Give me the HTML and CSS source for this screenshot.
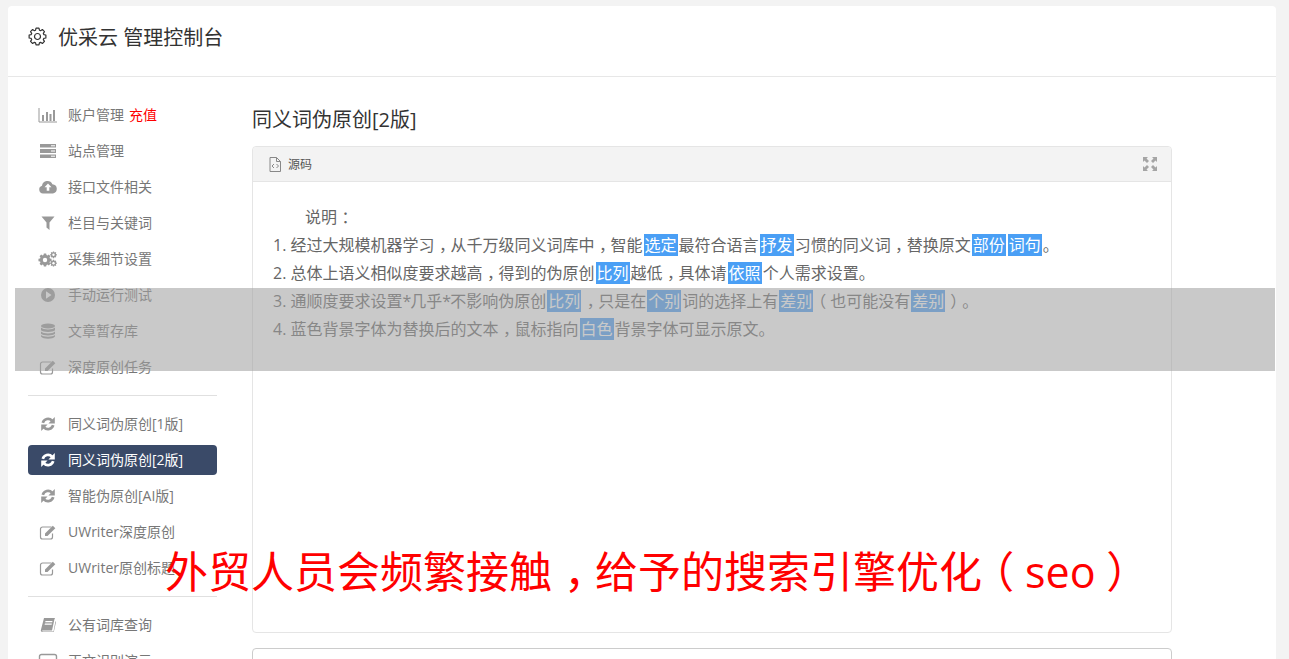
FILE: index.html
```html
<!DOCTYPE html>
<html lang="zh-CN">
<head>
  <meta charset="UTF-8">
  <meta name="viewport" content="width=device-width, initial-scale=1.0">
  <title>优采云 管理控制台</title>
  <link rel="stylesheet" href="styles.css">
</head>
<body>
  <svg class="sprite" aria-hidden="true">
    <defs>
      <path id="gear" d="M6.31-1.93L8.37-1.48 8.37 1.48 6.31 1.93 5.83 3.1 6.96 4.88 4.88 6.96 3.1 5.83 1.93 6.31 1.48 8.37-1.48 8.37-1.93 6.31-3.1 5.83-4.88 6.96-6.96 4.88-5.83 3.1-6.31 1.93-8.37 1.48-8.37-1.48-6.31-1.93-5.83-3.1-6.96-4.88-4.88-6.96-3.1-5.83-1.93-6.31-1.48-8.37 1.48-8.37 1.93-6.31 3.1-5.83 4.88-6.96 6.96-4.88 5.83-3.1Z"/>
    </defs>
    <symbol id="i-chart" viewBox="0 0 20 16">
      <path d="M1 1v14h18" fill="none" stroke="currentColor"/>
      <path d="M4 8h2v6H4zM8 5h2v9H8zM11.500 7h2v7h-2zM15 3h2v11h-2z" fill="currentColor"/>
    </symbol>
    <symbol id="i-server" viewBox="0 0 20 16">
      <path d="M2 1h16v3.500H2zM2 6h16v4H2zM2 11.500h16V15H2z" fill="currentColor"/>
      <path d="M13 2.800h4M13 8h4M13 13.200h4" stroke="#fff"/>
    </symbol>
    <symbol id="i-cloud" viewBox="0 0 20 16">
      <path d="M5 14.500a4 4 0 0 1-1-7.800 5.500 5.500 0 0 1 10.400-1.500 4.700 4.700 0 0 1 .6 9.300z" fill="currentColor"/>
      <path d="M10 4.500l3.500 3.700h-2.200v3.600H8.700V8.200H6.500z" fill="#fff"/>
    </symbol>
    <symbol id="i-filter" viewBox="0 0 20 16">
      <path d="M3.500 1.500h13L11.500 7.500v7.500l-3-2.500v-5z" fill="currentColor"/>
    </symbol>
    <symbol id="i-cogs" viewBox="0 0 20 16">
      <g transform="translate(7 9) scale(.78)"><use href="#gear" fill="currentColor"/><circle r="2.800" fill="#fff"/></g>
      <g transform="translate(15.500 3.800) scale(.4)"><use href="#gear" fill="currentColor"/><circle r="3" fill="#fff"/></g>
      <g transform="translate(15.500 12.200) scale(.4)"><use href="#gear" fill="currentColor"/><circle r="3" fill="#fff"/></g>
    </symbol>
    <symbol id="i-play" viewBox="0 0 20 16">
      <circle cx="10" cy="8" r="7" fill="currentColor"/>
      <path d="M8 4.300L13.500 8 8 11.700z" fill="#fff"/>
    </symbol>
    <symbol id="i-db" viewBox="0 0 20 16">
      <ellipse cx="10" cy="3" rx="7" ry="2.500" fill="currentColor"/>
      <path d="M3 4.500C5 7 15 7 17 4.500V7.200C15 9.500 5 9.500 3 7.200zM3 8.500C5 11 15 11 17 8.500V10.800C15 13 5 13 3 10.800zM3 12C5 14.300 15 14.300 17 12V13.500C15 16.500 5 16.500 3 13.500z" fill="currentColor"/>
    </symbol>
    <symbol id="i-edit" viewBox="0 0 20 16">
      <path d="M13.500 3H4.500A2 2 0 0 0 2.500 5v8a2 2 0 0 0 2 2h8a2 2 0 0 0 2-2V9.500" fill="none" stroke="currentColor" stroke-width="1.200"/>
      <path d="M7 9.500L14.800 1.700 17.300 4.200 9.500 12H7z" fill="currentColor"/>
    </symbol>
    <symbol id="i-refresh" viewBox="0 0 20 16">
      <path d="M4.800 6.800A5.400 5.400 0 0 1 14 4.600M15.200 9.200A5.400 5.400 0 0 1 6 11.400" fill="none" stroke="currentColor" stroke-width="2.700"/>
      <path d="M16.800 1V7.400H10.400zM3.200 15V8.600H9.600z" fill="currentColor"/>
    </symbol>
    <symbol id="i-book" viewBox="0 0 20 16">
      <path d="M6 1h11l-.6 1.500L14 13.500H4.500C3.800 13.500 4 14.500 5 14.500h10.500L17.500 4l.5 1-2.200 10H4.500C3 15 2.500 13.800 3 12.500zM7.500 4l-.3 1.200h7L14.500 4zM6.900 6.500l-.3 1.200h7l.3-1.200z" fill="currentColor" fill-rule="evenodd"/>
    </symbol>
    <symbol id="i-screen" viewBox="0 0 20 16">
      <rect x="1.500" y="1.500" width="17" height="13" rx="2" fill="none" stroke="currentColor" stroke-width="1.400"/>
    </symbol>
  </svg>

  <div class="card">
    <div class="card-head">
      <svg class="head-gear" viewBox="-9.500 -9.500 19 19"><use href="#gear"/><circle r="3"/></svg>
      <span>优采云 管理控制台</span>
    </div>

    <div class="main">
      <div class="side">
        <a class="item"><svg class="ico"><use href="#i-chart"/></svg>账户管理<b class="pay">充值</b></a>
        <a class="item"><svg class="ico"><use href="#i-server"/></svg>站点管理</a>
        <a class="item"><svg class="ico"><use href="#i-cloud"/></svg>接口文件相关</a>
        <a class="item"><svg class="ico"><use href="#i-filter"/></svg>栏目与关键词</a>
        <a class="item"><svg class="ico"><use href="#i-cogs"/></svg>采集细节设置</a>
        <a class="item"><svg class="ico"><use href="#i-play"/></svg>手动运行测试</a>
        <a class="item"><svg class="ico"><use href="#i-db"/></svg>文章暂存库</a>
        <a class="item"><svg class="ico"><use href="#i-edit"/></svg>深度原创任务</a>
        <div class="divider"></div>
        <a class="item"><svg class="ico"><use href="#i-refresh"/></svg>同义词伪原创[1版]</a>
        <a class="item active"><svg class="ico"><use href="#i-refresh"/></svg>同义词伪原创[2版]</a>
        <a class="item"><svg class="ico"><use href="#i-refresh"/></svg>智能伪原创[AI版]</a>
        <a class="item"><svg class="ico"><use href="#i-edit"/></svg>UWriter深度原创</a>
        <a class="item"><svg class="ico"><use href="#i-edit"/></svg>UWriter原创标题</a>
        <div class="divider"></div>
        <a class="item"><svg class="ico"><use href="#i-book"/></svg>公有词库查询</a>
        <a class="item"><svg class="ico"><use href="#i-screen"/></svg>正文识别演示</a>
      </div>

      <div class="content">
        <h2>同义词伪原创[2版]</h2>
        <div class="panel">
          <div class="panel-head">
            <svg class="file-ico" viewBox="0 0 12 15">
              <path d="M1 .5h6.500L11.500 4.500v10H1zM7.500 .5v4h4"/>
              <path d="M5 7L3 9l2 2M7.500 7l2 2-2 2"/>
            </svg>
            <span>源码</span>
            <svg class="expand-ico" viewBox="0 0 14 14">
              <path d="M0 0h5L3.500 1.500 6 4 4 6 1.500 3.500 0 5zM14 0v5L12.500 3.500 10 6 8 4 10.500 1.500 9 0zM0 14V9L1.500 10.500 4 8 6 10 3.500 12.500 5 14zM14 14H9L10.500 12.500 8 10 10 8 12.500 10.500 14 9z"/>
            </svg>
          </div>
          <div class="panel-body">
            <p class="intro">说明<i class="cm">：</i></p>
            <p>1. 经过大规模机器学习<i class="cm">，</i>从千万级同义词库中<i class="cm">，</i>智能<em>选定</em>最符合语言<em>抒发</em>习惯的同义词<i class="cm">，</i>替换原文<em>部份</em><em>词句</em>。</p>
            <p>2. 总体上语义相似度要求越高<i class="cm">，</i>得到的伪原创<em>比列</em>越低<i class="cm">，</i>具体请<em>依照</em>个人需求设置。</p>
            <p>3. 通顺度要求设置<span class="star">*</span>几乎<span class="star">*</span>不影响伪原创<em>比列</em><i class="cm">，</i>只是在<em>个别</em>词的选择上有<em>差别</em><i class="lp">（</i>也可能没有<em>差别</em><i class="rp">）</i>。</p>
            <p>4. 蓝色背景字体为替换后的文本<i class="cm">，</i>鼠标指向<em>白色</em>背景字体可显示原文。</p>
          </div>
        </div>
        <div class="panel"></div>
      </div>
    </div>
  </div>

  <div class="band"></div>
  <div class="caption">外贸人员会频繁接触<i class="cm">，</i>给予的搜索引擎优化<i class="lp">（</i>seo<i class="rp">）</i></div>
</body>
</html>
```

FILE: styles.css
```css
body {
  font-family: "Open Sans", "Noto Sans CJK SC", sans-serif;
  margin: 0;
  height: 659px;
  overflow: hidden;
  background: #f3f3f3;
  color: #676a6c;
}
.sprite {
  display: none;
}
/* full-width punctuation sits centred in the box in the original font */
.cm, .lp, .rp {
  display: inline-block;
  font-style: normal;
  text-indent: 0;
}
.cm { transform: translateX(0.28em); }
.lp { transform: translateX(-0.25em); }
.rp { transform: translateX(0.25em); }
.card {
  margin: 6px 13px 0 8px;
  background: #fff;
  border-radius: 4px;
  height: 700px;
}
.card-head {
  display: flex;
  align-items: center;
  height: 60px;
  padding: 0 0 10px 20px;
  border-bottom: 1px solid #e7e7e7;
  font-size: 20px;
  color: #333;
}
.head-gear {
  width: 19px;
  height: 19px;
  margin-right: 11px;
  fill: none;
  stroke: #333;
  stroke-width: 1.2;
  stroke-linejoin: round;
}
.main {
  display: flex;
  padding: 23px 0 0 20px;
}
.side {
  width: 189px;
  margin-right: 35px;
  flex-shrink: 0;
}
.item {
  display: flex;
  align-items: center;
  box-sizing: border-box;
  height: 30px;
  margin-bottom: 6px;
  padding: 0 0 2px 10px;
  border-radius: 4px;
  font-size: 14px;
  color: #777;
}
.item .ico {
  width: 20px;
  height: 16px;
  margin: 2px 10px 0 0;
  color: #999;
}
.pay {
  margin-left: 5px;
  font-weight: normal;
  color: #f00;
}
.active {
  background: #3a4a68;
  color: #fff;
}
.item.active .ico {
  color: #fff;
}
.divider {
  height: 1px;
  margin: 13px 0;
  background: #e0e0e0;
}
.content {
  width: 920px;
}
h2 {
  margin: 6px 0 12px;
  font-size: 20px;
  font-weight: normal;
  line-height: 28px;
  color: #333;
}
.panel {
  height: 485px;
  margin-bottom: 15px;
  border: 1px solid #e5e5e5;
  border-radius: 4px;
}
.panel + .panel {
  border-color: #ccc;
}
.panel-head {
  display: flex;
  align-items: center;
  height: 34px;
  padding: 0 14px 0 16px;
  background: #f3f3f3;
  border-bottom: 1px solid #e5e5e5;
  border-radius: 4px 4px 0 0;
  font-size: 12px;
  color: #555;
}
.file-ico {
  width: 12px;
  height: 15px;
  margin-right: 7px;
  fill: none;
  stroke: #888;
}
.expand-ico {
  width: 14px;
  height: 14px;
  margin-left: auto;
  fill: #a5a5a5;
}
.panel-body {
  padding: 21px 20px;
  font-size: 16px;
  line-height: 28px;
  color: #666;
}
.panel-body p {
  margin: 0;
}
.intro {
  text-indent: 2em;
}
.panel-body em {
  font-style: normal;
  margin: 0 1px;
  padding: 0 1px;
  background: #4a9ff5;
  color: #fff;
}
.star {
  letter-spacing: -1px;
}
.band {
  position: absolute;
  top: 288px;
  left: 15px;
  width: 1260px;
  height: 83px;
  background: rgba(160, 160, 160, 0.57);
}
.caption {
  position: absolute;
  top: 542px;
  left: 165px;
  font-size: 43px;
  line-height: 60px;
  white-space: nowrap;
  color: #f00;
}
```
